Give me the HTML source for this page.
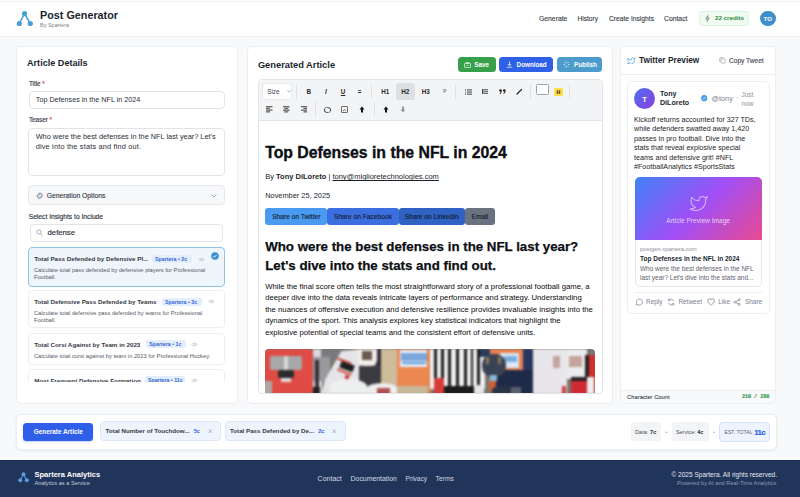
<!DOCTYPE html>
<html><head><meta charset="utf-8">
<style>
*{box-sizing:border-box;margin:0;padding:0}
html,body{width:800px;height:497px;overflow:hidden;background:#f8f9fb;font-family:"Liberation Sans",sans-serif;color:#1f2330}
.a{position:absolute}
.md{-webkit-text-stroke:.15px currentColor}
.nw{white-space:nowrap}
#hdr{left:0;top:0;width:800px;height:36.8px;background:#fff;border-bottom:1px solid #eceef1}
.card{background:#fff;border:1px solid #eceef1;border-radius:5px}
#footer{left:0;top:459.5px;width:800px;height:38px;background:#21355a;border-top:1px solid #1a2a4a}
.lbl{font-size:6.3px;color:#333844;-webkit-text-stroke:.15px #333844}
.req{color:#e5484d;-webkit-text-stroke:.15px #e5484d}
.inp{background:#fff;border:1px solid #e1e4e9;border-radius:4px}
.it{position:absolute;left:0;width:196.5px;background:#fff;border:1px solid #eceef2;border-radius:4px}
.it.sel{background:#eef5fb;border-color:#8fc2e8}
.itt{position:absolute;left:4.9px;top:7px;font-size:6.25px;font-weight:700;color:#353944;white-space:nowrap}
.tag{position:absolute;top:6.7px;height:8.1px;padding:0 0 0 3px;background:#e4edfc;border-radius:2px;color:#3566d6;font-size:5.3px;font-weight:700;line-height:8.1px;white-space:nowrap;width:40.1px}
.eye{position:absolute;top:8.5px;width:7px;height:5px}
.itd{position:absolute;left:4.6px;top:19.2px;width:178px;font-size:5.75px;line-height:6.9px;color:#555a66}
.btn{top:57.2px;height:14.8px;border-radius:3.5px}
.btt{top:60.8px;font-size:6.3px;font-weight:700;color:#fff}
.sep{width:1px;height:15px;background:#dfe2e6}
.tbi{font-size:6.3px;color:#2a2a2a}
.shb{top:207.8px;height:17px;border-radius:3px;font-size:6.65px;line-height:17.6px;text-align:center;color:#131c33;white-space:nowrap;-webkit-text-stroke:.12px #131c33}
.act{top:297.6px;width:8.2px;height:8.2px}
.actt{top:297.8px;font-size:6.45px;color:#7b8190}
.chip{top:421.25px;height:19.25px;background:#eef4fd;border:1px solid #dce7f7;border-radius:4px}
.chipt{top:427.3px;font-size:6.2px;font-weight:700;color:#353944}
.chipc{top:428px;font-size:5.6px;font-weight:700;color:#2f5ee8}
.chipx{top:428.5px;width:4.5px;height:4.5px}
.flk{top:474.6px;color:#d3d9e3}
</style></head><body>
<div id="hdr" class="a"></div>
<div class="a" style="left:0;top:1px;width:800px;height:1px;background:#eef0f2"></div>
<!-- logo -->
<svg class="a" style="left:14px;top:9px" width="20" height="20" viewBox="0 0 20 20">
<g stroke="#4aa0d5" stroke-width="1.5" fill="none"><line x1="10.56" y1="4.6" x2="5.3" y2="14.5"/><line x1="10.56" y1="4.6" x2="16.3" y2="14.5"/></g>
<g fill="#4aa0d5"><circle cx="10.56" cy="4.6" r="2.6"/><circle cx="5.3" cy="14.5" r="2.6"/><circle cx="16.3" cy="14.5" r="2.6"/></g>
</svg>
<div class="a nw" style="left:40px;top:9px;font-size:10.8px;font-weight:700;color:#1b1f2e">Post Generator</div>
<div class="a nw" style="left:40px;top:22px;font-size:5.5px;color:#7a7f8a">By Spartera</div>
<div class="a nw" style="left:539px;top:15px;font-size:6.8px;color:#333844;-webkit-text-stroke:.1px #333844">Generate</div>
<div class="a nw" style="left:577.5px;top:15px;font-size:6.6px;color:#333844;-webkit-text-stroke:.1px #333844">History</div>
<div class="a nw" style="left:609px;top:15px;font-size:6.7px;color:#333844;-webkit-text-stroke:.1px #333844">Create Insights</div>
<div class="a nw" style="left:664px;top:15px;font-size:6.8px;color:#333844;-webkit-text-stroke:.1px #333844">Contact</div>
<div class="a" style="left:699px;top:11px;width:50px;height:15px;background:#f0fbf2;border:1px solid #d8f3de;border-radius:4px"></div>
<svg class="a" style="left:705.3px;top:15.2px" width="5" height="7" viewBox="0 0 10 14"><path d="M6 1L1.5 8H5l-1 5 4.5-7H5z" fill="none" stroke="#4b6b55" stroke-width="1.2" stroke-linejoin="round"/></svg>
<div class="a nw" style="left:715px;top:14px;font-size:6.2px;font-weight:700;color:#2e8b40">22 credits</div>
<div class="a" style="left:760px;top:10.8px;width:15.6px;height:15.6px;border-radius:50%;background:#3d8fcb"></div>
<div class="a nw" style="left:760px;top:14.6px;width:15.6px;text-align:center;font-size:6.2px;font-weight:700;color:#fff">TO</div>

<!-- cards -->
<div class="a card" style="left:16px;top:46px;width:222px;height:358px"></div>
<!-- LEFT CARD CONTENT -->
<div class="a nw" style="left:27px;top:58.4px;font-size:9.1px;font-weight:700;color:#1b1f2e">Article Details</div>
<div class="a nw lbl" style="left:28.9px;top:80px">Title <span class="req">*</span></div>
<div class="a inp" style="left:28.5px;top:91.2px;width:196.2px;height:17.6px"></div>
<div class="a nw" style="left:35.8px;top:94.9px;font-size:7.2px;color:#2a2e38">Top Defenses in the NFL in 2024</div>
<div class="a nw lbl" style="left:28.9px;top:116.2px">Teaser <span class="req">*</span></div>
<div class="a inp" style="left:28.4px;top:128.1px;width:196.3px;height:48.2px"></div>
<div class="a" style="left:35.7px;top:131.8px;width:185px;font-size:7.35px;line-height:9.7px;color:#2a2e38;white-space:nowrap">Who were the best defenses in the NFL last year? Let's<br><span style="letter-spacing:.18px">dive into the stats and find out.</span></div>
<div class="a" style="left:28.4px;top:185.3px;width:196.3px;height:20.2px;background:#f7f8fa;border:1px solid #e6e8ec;border-radius:4px"></div>
<svg class="a" style="left:35.7px;top:191.7px" width="7.6" height="7.6" viewBox="0 0 16 16"><g fill="#d5d8dd" stroke="#858a94" stroke-width="1.7"><circle cx="8" cy="8" r="2.3"/><path d="M8 1.5l1.3 1.6 2-.5.4 2 1.9.9-.9 1.8.9 1.8-1.9.9-.4 2-2-.5L8 14.5l-1.3-1.6-2 .5-.4-2-1.9-.9.9-1.8-.9-1.8 1.9-.9.4-2 2 .5z"/></g></svg>
<div class="a nw md" style="left:46.8px;top:191.5px;font-size:6.75px;color:#3a3f4b">Generation Options</div>
<svg class="a" style="left:210.5px;top:193.5px" width="6" height="4" viewBox="0 0 6 4"><path d="M.6.6L3 3 5.4.6" fill="none" stroke="#8a8f99" stroke-width=".8"/></svg>
<div class="a nw md" style="left:28.7px;top:213.1px;font-size:6.7px;color:#2f3440">Select Insights to Include</div>
<div class="a inp" style="left:29.8px;top:224.2px;width:192.8px;height:17.8px"></div>
<svg class="a" style="left:35.5px;top:229.2px" width="7" height="7" viewBox="0 0 14 14"><g fill="none" stroke="#8a8f99" stroke-width="1.4"><circle cx="6" cy="6" r="4.3"/><path d="M9.2 9.2L13 13"/></g></svg>
<div class="a nw md" style="left:47.6px;top:228.3px;font-size:7.7px;color:#2a2e38">defense</div>

<div class="a" style="left:28.3px;top:247px;width:196.7px;height:135.3px;overflow:hidden">
  <div class="it sel" style="top:0.3px;height:39.6px">
    <div class="itt">Total Pass Defended by Defensive Pl...</div>
    <div class="tag" style="left:122.7px">Spartera • 2c</div>
    <svg class="eye" style="left:169px" viewBox="0 0 14 10"><path d="M1 5C3 1.5 11 1.5 13 5 11 8.5 3 8.5 1 5z" fill="none" stroke="#b8bcc4" stroke-width="1.1"/><circle cx="7" cy="5" r="1.6" fill="none" stroke="#b8bcc4" stroke-width="1.1"/></svg>
    <svg class="a" style="left:181.5px;top:4.2px" width="8" height="8" viewBox="0 0 8 8"><circle cx="4" cy="4" r="3.8" fill="#3d8fd0"/><path d="M2.2 4.1l1.2 1.1 2.3-2.4" fill="none" stroke="#fff" stroke-width=".9"/></svg>
    <div class="itd">Calculate total pass defended by defensive players for Professional Football.</div>
  </div>
  <div class="it" style="top:42.9px;height:38.3px">
    <div class="itt">Total Defensive Pass Defended by Teams</div>
    <div class="tag" style="left:132.7px">Spartera • 3c</div>
    <svg class="eye" style="left:178.5px" viewBox="0 0 14 10"><path d="M1 5C3 1.5 11 1.5 13 5 11 8.5 3 8.5 1 5z" fill="none" stroke="#b8bcc4" stroke-width="1.1"/><circle cx="7" cy="5" r="1.6" fill="none" stroke="#b8bcc4" stroke-width="1.1"/></svg>
    <div class="itd">Calculate total defensive pass defended by teams for Professional Football.</div>
  </div>
  <div class="it" style="top:85.5px;height:32.2px">
    <div class="itt">Total Corsi Against by Team in 2023</div>
    <div class="tag" style="left:116.9px">Spartera • 1c</div>
    <svg class="eye" style="left:161.5px" viewBox="0 0 14 10"><path d="M1 5C3 1.5 11 1.5 13 5 11 8.5 3 8.5 1 5z" fill="none" stroke="#b8bcc4" stroke-width="1.1"/><circle cx="7" cy="5" r="1.6" fill="none" stroke="#b8bcc4" stroke-width="1.1"/></svg>
    <div class="itd" style="width:190px">Calculate total corsi against by team in 2023 for Professional Hockey.</div>
  </div>
  <div class="it" style="top:121.5px;height:38px">
    <div class="itt">Most Frequent Defensive Formation</div>
    <div class="tag" style="left:115.6px;width:40.3px">Spartera • 11c</div>
    <svg class="eye" style="left:162px" viewBox="0 0 14 10"><path d="M1 5C3 1.5 11 1.5 13 5 11 8.5 3 8.5 1 5z" fill="none" stroke="#b8bcc4" stroke-width="1.1"/><circle cx="7" cy="5" r="1.6" fill="none" stroke="#b8bcc4" stroke-width="1.1"/></svg>
  </div>
</div>

<div class="a card" style="left:247.3px;top:46px;width:365.9px;height:358px"></div>

<!-- MIDDLE CARD CONTENT -->
<div class="a nw" style="left:257.9px;top:60px;font-size:9.3px;font-weight:700;color:#1b1f2e">Generated Article</div>
<div class="a btn" style="left:457.5px;width:38.4px;background:#36a04b"></div>
<svg class="a" style="left:464px;top:61.5px" width="7" height="6" viewBox="0 0 14 12"><g fill="none" stroke="#fff" stroke-width="1.3"><rect x="1" y="3" width="12" height="8" rx="1"/><path d="M4 3V1h6v2M5 7h4"/></g></svg>
<div class="a nw btt" style="left:474.3px">Save</div>
<div class="a btn" style="left:499.3px;width:54px;background:#2f60e8"></div>
<svg class="a" style="left:505.5px;top:61.2px" width="7" height="7" viewBox="0 0 14 14"><g fill="none" stroke="#fff" stroke-width="1.4"><path d="M7 1v8M3.5 6L7 9.5 10.5 6M1.5 12.5h11"/></g></svg>
<div class="a nw btt" style="left:516.6px">Download</div>
<div class="a btn" style="left:557.1px;width:45px;background:#4b9bcc"></div>
<svg class="a" style="left:563px;top:61.2px" width="7" height="7" viewBox="0 0 14 14"><g fill="none" stroke="#fff" stroke-width="1.3"><path d="M7 1v3M7 10v3M1 7h3M10 7h3M2.8 2.8l2 2M9.2 9.2l2 2M2.8 11.2l2-2M9.2 4.8l2-2"/></g></svg>
<div class="a nw btt" style="left:574px">Publish</div>

<div class="a" style="left:258.4px;top:79.2px;width:344.4px;height:314.4px;border:1px solid #e3e5ea;border-radius:4px;overflow:hidden;background:#fff">
  <div class="a" style="left:0;top:0;width:344.4px;height:41px;background:#f3f4f6;border-bottom:1px solid #e3e5ea"></div>
</div>
<!-- toolbar row 1 -->
<div class="a" style="left:261.75px;top:83.25px;width:30.5px;height:16.5px;background:#fff;border:1px solid #e6e8ec;border-radius:3px"></div>
<div class="a nw tb" style="left:267.2px;top:88px;font-size:6.3px;color:#3f444f">Size</div>
<svg class="a" style="left:287px;top:90px" width="4" height="3" viewBox="0 0 6 4"><path d="M.6.6L3 3 5.4.6" fill="none" stroke="#777" stroke-width=".9"/></svg>
<div class="a sep" style="left:296px;top:84px"></div>
<div class="a nw tbi" style="left:306.5px;top:88px;font-weight:700">B</div>
<div class="a nw tbi" style="left:325px;top:88px;font-style:italic;font-weight:700">I</div>
<div class="a nw tbi" style="left:340.8px;top:88px;text-decoration:underline;font-weight:700">U</div>
<div class="a nw tbi" style="left:357.8px;top:87.8px;font-weight:700">=</div>
<div class="a sep" style="left:371.3px;top:84px"></div>
<div class="a nw tbi" style="left:381.2px;top:88px;font-weight:700">H1</div>
<div class="a" style="left:396.3px;top:83px;width:18.7px;height:16.5px;background:#dcdfe4;border-radius:3px"></div>
<div class="a nw tbi" style="left:401.3px;top:88px;font-weight:700">H2</div>
<div class="a nw tbi" style="left:421.8px;top:88px;font-weight:700">H3</div>
<div class="a nw tbi" style="left:443.2px;top:89px;font-size:4.5px;font-weight:700;color:#777">P</div>
<div class="a sep" style="left:455.4px;top:84px"></div>
<svg class="a" style="left:465px;top:88.6px" width="7" height="6" viewBox="0 0 14 12"><g fill="#222"><circle cx="1.2" cy="1.8" r="1.1"/><circle cx="1.2" cy="6" r="1.1"/><circle cx="1.2" cy="10.2" r="1.1"/><rect x="4" y="1" width="10" height="1.7"/><rect x="4" y="5.2" width="10" height="1.7"/><rect x="4" y="9.4" width="10" height="1.7"/></g></svg>
<svg class="a" style="left:482.3px;top:88.9px" width="6" height="5.5" viewBox="0 0 12 11"><g fill="#444"><rect x="0" y="0" width="3" height="11"/><rect x="4" y="0.5" width="8" height="2"/><rect x="4" y="4.5" width="8" height="2"/><rect x="4" y="8.5" width="8" height="2"/></g></svg>
<svg class="a" style="left:499.3px;top:88.8px" width="7" height="5.5" viewBox="0 0 14 11"><g fill="#222"><circle cx="3" cy="3" r="2.6"/><path d="M5.4 3.5C5.4 7 4 9 1.5 10.5L1 9.5C2.5 8.5 3 7 3 5.5z"/><circle cx="10.5" cy="3" r="2.6"/><path d="M12.9 3.5C12.9 7 11.5 9 9 10.5L8.5 9.5C10 8.5 10.5 7 10.5 5.5z"/></g></svg>
<svg class="a" style="left:516px;top:88px" width="7" height="7" viewBox="0 0 14 14"><path d="M2 12L11 3" stroke="#222" stroke-width="2.4" stroke-linecap="round"/></svg>
<div class="a sep" style="left:530px;top:84px"></div>
<div class="a" style="left:536.4px;top:84.2px;width:12.4px;height:10.8px;background:#fff;border:1px solid #9ca3af;border-radius:1.5px"></div>
<div class="a" style="left:554.4px;top:87.8px;width:8.4px;height:7.9px;background:#fde047;border-radius:1px"></div>
<div class="a nw" style="left:556.5px;top:89.1px;font-size:5.3px;font-weight:700;color:#222">H</div>
<div class="a sep" style="left:569px;top:84px"></div>
<!-- toolbar row 2 -->
<svg class="a" style="left:266px;top:106.3px" width="6.5" height="6.5" viewBox="0 0 13 13"><g fill="#666"><rect x="0" y="0" width="13" height="2.6"/><rect x="0" y="3.5" width="8" height="2.6"/><rect x="0" y="7" width="13" height="2.6"/><rect x="0" y="10.4" width="8" height="2.6"/></g></svg>
<svg class="a" style="left:283.2px;top:106.3px" width="6.5" height="6.5" viewBox="0 0 13 13"><g fill="#666"><rect x="0" y="0" width="13" height="2.6"/><rect x="2.5" y="3.5" width="8" height="2.6"/><rect x="0" y="7" width="13" height="2.6"/><rect x="2.5" y="10.4" width="8" height="2.6"/></g></svg>
<svg class="a" style="left:300.5px;top:106.3px" width="6.5" height="6.5" viewBox="0 0 13 13"><g fill="#666"><rect x="0" y="0" width="13" height="2.6"/><rect x="5" y="3.5" width="8" height="2.6"/><rect x="0" y="7" width="13" height="2.6"/><rect x="5" y="10.4" width="8" height="2.6"/></g></svg>
<div class="a sep" style="left:314.6px;top:102.2px;height:14.8px"></div>
<svg class="a" style="left:324px;top:106.5px" width="7" height="6" viewBox="0 0 14 12"><path d="M3 1h8l2.5 5L11 11H3L.5 6z" fill="none" stroke="#333" stroke-width="1.6" transform="rotate(20 7 6)"/></svg>
<svg class="a" style="left:341px;top:106px" width="7" height="7" viewBox="0 0 14 14"><g fill="none" stroke="#444" stroke-width="1.5"><rect x="1" y="1" width="12" height="12" rx="1"/><path d="M4 10l3-3 3 3"/></g></svg>
<svg class="a" style="left:359px;top:106px" width="6" height="7" viewBox="0 0 12 14"><path d="M6 1L1 7h3v6h4V7h3z" fill="#111"/></svg>
<div class="a sep" style="left:373.6px;top:102.2px;height:14.8px"></div>
<svg class="a" style="left:383.2px;top:106px" width="6" height="7" viewBox="0 0 12 14"><path d="M6 1L1 7h3v6h4V7h3z" fill="#111"/></svg>
<svg class="a" style="left:400.2px;top:106px" width="6" height="7" viewBox="0 0 12 14"><path d="M6 13L1 7h3V1h4v6h3z" fill="#999"/></svg>

<!-- article content -->
<div class="a nw" style="left:265.2px;top:144.3px;font-size:15.8px;font-weight:700;color:#0d0f14;-webkit-text-stroke:.35px #0d0f14">Top Defenses in the NFL in 2024</div>
<div class="a nw" style="left:265.2px;top:172.3px;font-size:7.5px;color:#1b1f2a">By <b>Tony DiLoreto</b> | <span style="text-decoration:underline">tony@miglioretechnologies.com</span></div>
<div class="a nw" style="left:265.2px;top:190.5px;font-size:7.4px;color:#1b1f2a">November 25, 2025</div>
<div class="a shb" style="left:265.2px;width:62.2px;background:#4a9af0">Share on Twitter</div>
<div class="a shb" style="left:327.4px;width:71.2px;background:#3b6fe0">Share on Facebook</div>
<div class="a shb" style="left:398.6px;width:66.3px;background:#2f62c2">Share on LinkedIn</div>
<div class="a shb" style="left:464.9px;width:30px;background:#6b7280">Email</div>
<div class="a nw" style="left:265.2px;top:236.5px;font-size:13.3px;line-height:19.6px;font-weight:700;color:#0d0f14;-webkit-text-stroke:.25px #0d0f14">Who were the best defenses in the NFL last year?<br>Let's dive into the stats and find out.</div>
<div class="a nw" style="left:265.2px;top:280.5px;font-size:7.72px;line-height:11.65px;color:#0a0a0a">While the final score often tells the most straightforward story of a professional football game, a<br>deeper dive into the data reveals intricate layers of performance and strategy. Understanding<br>the nuances of offensive execution and defensive resilience provides invaluable insights into the<br>dynamics of the sport. This analysis explores key statistical indicators that highlight the<br>explosive potential of special teams and the consistent effort of defensive units.</div>
<div class="a" id="photo" style="left:264.6px;top:349.2px;width:330.7px;height:44px;border-radius:4px 4px 0 0;overflow:hidden;background:#7a7670"><div style="position:absolute;left:0;top:0;width:331px;height:44px;filter:blur(1.3px)"><div style="position:absolute;left:-0.6px;top:-0.2px;width:39.0px;height:45.0px;background:#e04b45;"></div><div style="position:absolute;left:48.4px;top:-0.2px;width:9.0px;height:45.0px;background:#d8d8dc;"></div><div style="position:absolute;left:48.4px;top:7.4px;width:17.0px;height:24.4px;background:#9a9a9e;"></div><div style="position:absolute;left:50.4px;top:10.8px;width:4.4px;height:28.5px;background:#333338;"></div><div style="position:absolute;left:48.4px;top:38.2px;width:7.0px;height:6.6px;background:#222;"></div><div style="position:absolute;left:5.4px;top:6.8px;width:32.4px;height:14.4px;background:#a8a8aa;border-radius:2px;"></div><div style="position:absolute;left:19.4px;top:6.8px;width:4.0px;height:14.0px;background:#d8d8d8;"></div><div style="position:absolute;left:37.4px;top:-0.2px;width:11.0px;height:45.0px;background:#e04b45;border-radius:0 4px 4px 0;"></div><div style="position:absolute;left:13.4px;top:20.8px;width:16.0px;height:8.0px;background:#2b2b2b;border-radius:2px;"></div><div style="position:absolute;left:16.4px;top:28.8px;width:9.7px;height:3.6px;background:#dddddd;"></div><div style="position:absolute;left:-0.6px;top:31.8px;width:7.6px;height:13.0px;background:#b0a8a8;"></div><div style="position:absolute;left:56.9px;top:-0.2px;width:25.5px;height:7.6px;background:#7a7a7e;"></div><div style="position:absolute;left:56.9px;top:-0.2px;width:39.5px;height:45.0px;background:#e6e4e8;clip-path:polygon(50% 5%,100% 0,100% 100%,0 100%,8% 70%);"></div><div style="position:absolute;left:75.0px;top:13.8px;width:13.9px;height:7.4px;background:#1e1e1e;transform:rotate(20deg);"></div><div style="position:absolute;left:72.4px;top:10.6px;width:15.0px;height:2.2px;background:#d04a3a;transform:rotate(20deg);"></div><div style="position:absolute;left:72.4px;top:22.3px;width:15.0px;height:2.1px;background:#d04a3a;transform:rotate(20deg);"></div><div style="position:absolute;left:80.4px;top:25.5px;width:4.0px;height:4.3px;background:#c83a3a;"></div><div style="position:absolute;left:94.2px;top:17.0px;width:23.4px;height:19.8px;background:#3a3a40;"></div><div style="position:absolute;left:111.2px;top:-0.2px;width:6.4px;height:17.2px;background:#333338;"></div><div style="position:absolute;left:93.1px;top:-0.2px;width:19.1px;height:17.2px;background:#f0eee8;border-radius:0 0 6px 6px;"></div><div style="position:absolute;left:97.4px;top:2.1px;width:9.6px;height:8.5px;background:#6a5a50;"></div><div style="position:absolute;left:116.4px;top:-0.2px;width:17.0px;height:45.0px;background:#cdbb9a;"></div><div style="position:absolute;left:132.4px;top:-0.2px;width:32.0px;height:38.4px;background:#ec8752;"></div><div style="position:absolute;left:135.7px;top:0.5px;width:27.1px;height:17.0px;background:#e6eef8;"></div><div style="position:absolute;left:136.7px;top:4.2px;width:25.7px;height:7.5px;background:#7aa6dc;"></div><div style="position:absolute;left:137.4px;top:12.8px;width:24.0px;height:2.0px;background:#5a9ad8;"></div><div style="position:absolute;left:127.2px;top:37.2px;width:37.2px;height:7.6px;background:#c8b89a;"></div><div style="position:absolute;left:65.4px;top:29.8px;width:37.3px;height:15.0px;background:#eef0f0;border-radius:50% 50% 0 0;"></div><div style="position:absolute;left:102.7px;top:34.0px;width:29.7px;height:10.8px;background:#eeeeee;border-radius:50% 50% 0 0;"></div><div style="position:absolute;left:112.4px;top:39.3px;width:12.6px;height:5.5px;background:#b05050;"></div><div style="position:absolute;left:163.4px;top:-0.2px;width:3.0px;height:45.0px;background:#e08050;"></div><div style="position:absolute;left:165.4px;top:-0.2px;width:55.4px;height:39.5px;background:#f0f0f0;"></div><div style="position:absolute;left:169.4px;top:-0.2px;width:2.8px;height:39.5px;background:#1c1c1c;"></div><div style="position:absolute;left:176.9px;top:-0.2px;width:2.8px;height:39.5px;background:#1c1c1c;"></div><div style="position:absolute;left:183.8px;top:-0.2px;width:2.8px;height:39.5px;background:#1c1c1c;"></div><div style="position:absolute;left:191.8px;top:-0.2px;width:2.8px;height:39.5px;background:#1c1c1c;"></div><div style="position:absolute;left:199.2px;top:-0.2px;width:2.8px;height:39.5px;background:#1c1c1c;"></div><div style="position:absolute;left:206.1px;top:-0.2px;width:2.8px;height:39.5px;background:#1c1c1c;"></div><div style="position:absolute;left:212.5px;top:-0.2px;width:2.8px;height:39.5px;background:#1c1c1c;"></div><div style="position:absolute;left:169.8px;top:28.8px;width:9.6px;height:16.0px;background:#d83a3a;"></div><div style="position:absolute;left:179.4px;top:37.2px;width:29.7px;height:7.6px;background:#1a1a1a;"></div><div style="position:absolute;left:209.1px;top:36.1px;width:10.6px;height:8.7px;background:#e8e8e8;"></div><div style="position:absolute;left:215.4px;top:-0.2px;width:9.6px;height:7.6px;background:#2a3a60;"></div><div style="position:absolute;left:225.0px;top:-0.2px;width:34.4px;height:24.2px;background:#e88050;"></div><div style="position:absolute;left:235.7px;top:4.2px;width:18.3px;height:14.3px;background:#dce9f6;"></div><div style="position:absolute;left:239.4px;top:6.8px;width:13.0px;height:6.0px;background:#7aaee0;"></div><div style="position:absolute;left:258.4px;top:-0.2px;width:10.8px;height:29.6px;background:#27365e;"></div><div style="position:absolute;left:231.4px;top:21.2px;width:47.6px;height:23.6px;background:#1f2a48;"></div><div style="position:absolute;left:217.6px;top:5.3px;width:23.4px;height:22.3px;background:#3a4255;border-radius:45%;"></div><div style="position:absolute;left:221.4px;top:7.8px;width:2.6px;height:7.0px;background:#8a7a58;"></div><div style="position:absolute;left:233.9px;top:7.8px;width:2.5px;height:7.0px;background:#8a7a58;"></div><div style="position:absolute;left:225.0px;top:25.5px;width:7.4px;height:6.3px;background:#8ab8d8;"></div><div style="position:absolute;left:224.0px;top:31.8px;width:7.4px;height:9.6px;background:#d06030;"></div><div style="position:absolute;left:227.2px;top:37.2px;width:21.2px;height:7.6px;background:#2a3448;border-radius:50% 50% 0 0;"></div><div style="position:absolute;left:246.4px;top:38.1px;width:9.8px;height:6.7px;background:#5a6070;"></div><div style="position:absolute;left:268.1px;top:-0.2px;width:34.8px;height:45.0px;background:#e8e6ea;"></div><div style="position:absolute;left:288.8px;top:6.6px;width:6.6px;height:11.9px;background:#c4a49c;"></div><div style="position:absolute;left:302.9px;top:-0.2px;width:19.5px;height:29.6px;background:#ecebee;"></div><div style="position:absolute;left:304.0px;top:6.6px;width:13.1px;height:10.9px;background:#c4a49c;"></div><div style="position:absolute;left:320.4px;top:5.5px;width:4.0px;height:23.9px;background:#2a2020;"></div><div style="position:absolute;left:324.4px;top:5.5px;width:7.0px;height:23.9px;background:#d03030;"></div><div style="position:absolute;left:306.2px;top:28.3px;width:16.2px;height:16.5px;background:#d02a35;"></div><div style="position:absolute;left:306.2px;top:28.3px;width:16.2px;height:3.5px;background:#2a2020;"></div><div style="position:absolute;left:322.4px;top:28.3px;width:6.6px;height:16.5px;background:#eeeeee;"></div><div style="position:absolute;left:329.0px;top:28.3px;width:2.4px;height:16.5px;background:#d03030;"></div><div style="position:absolute;left:297.4px;top:36.6px;width:4.5px;height:8.2px;background:#d04040;"></div></div></div></div>
<div class="a card" style="left:620px;top:46px;width:156px;height:358px"></div>


<!-- RIGHT CARD CONTENT -->
<svg class="a" style="left:627px;top:56.6px" width="8.5" height="7.5" viewBox="0 0 24 20"><path d="M23 2a10 10 0 0 1-3 1.5 4.5 4.5 0 0 0-7.9 3v1A10.7 10.7 0 0 1 3 3s-4 9 5 13a11.6 11.6 0 0 1-7 2c9 5 20 0 20-11.5a4.5 4.5 0 0 0-.1-.8A7.7 7.7 0 0 0 23 2z" fill="none" stroke="#4ea2e6" stroke-width="2.3" stroke-linejoin="round"/></svg>
<div class="a nw" style="left:639px;top:55.2px;font-size:8.3px;font-weight:700;color:#1b1f2e">Twitter Preview</div>
<svg class="a" style="left:719px;top:57px" width="6.5" height="6.5" viewBox="0 0 14 14"><g fill="none" stroke="#8a8f99" stroke-width="1.3"><rect x="4" y="4" width="9" height="9" rx="1.5"/><path d="M10 1.5H2.5a1 1 0 0 0-1 1V10"/></g></svg>
<div class="a nw md" style="left:729px;top:57px;font-size:6.6px;color:#4b505b">Copy Tweet</div>
<div class="a" style="left:621px;top:74px;width:155px;height:1px;background:#eceef2"></div>
<div class="a" style="left:627.3px;top:81.4px;width:142.8px;height:232.6px;border:1px solid #eceef2;border-radius:5px;background:#fff"></div>
<div class="a" style="left:634px;top:88px;width:21px;height:21px;border-radius:50%;background:linear-gradient(135deg,#4f6ff2,#8b3fdc)"></div>
<div class="a nw" style="left:634px;top:94.5px;width:21px;text-align:center;font-size:7.5px;font-weight:700;color:#fff">T</div>
<div class="a nw" style="left:660px;top:89.6px;font-size:7.1px;line-height:9.6px;font-weight:700;color:#1b1f2e">Tony<br>DiLoreto</div>
<svg class="a" style="left:701.2px;top:95.4px" width="6.4" height="6.4" viewBox="0 0 8 8"><circle cx="4" cy="4" r="3.9" fill="#4b9fe3"/><path d="M2.3 4.1l1.1 1 2.3-2.3" fill="none" stroke="#fff" stroke-width=".9"/></svg>
<div class="a nw" style="left:711.6px;top:93.8px;font-size:7.3px;color:#7b8190">@tony</div>
<div class="a nw" style="left:736px;top:93.8px;font-size:7px;color:#9aa0aa">·</div>
<div class="a nw" style="left:741.6px;top:90px;font-size:6.4px;line-height:9px;color:#8b909b">Just<br>now</div>
<div class="a nw" style="left:634px;top:115.5px;font-size:7.15px;line-height:9.55px;color:#1f2229">Kickoff returns accounted for 327 TDs,<br>while defenders swatted away 1,420<br>passes in pro football. Dive into the<br>stats that reveal explosive special<br>teams and defensive grit! #NFL<br>#FootballAnalytics #SportsStats</div>
<div class="a" style="left:634.75px;top:177.1px;width:127.15px;height:110.4px;border:1px solid #e6e8ec;border-radius:5px;background:#fff"></div>
<div class="a" style="left:634.75px;top:177.1px;width:127.15px;height:63.2px;border-radius:5px 5px 0 0;background:linear-gradient(135deg,#3f82f6 0%,#a04ff6 50%,#ea4a8f 100%)"></div>
<svg class="a" style="left:688.5px;top:195px" width="19.5" height="15.5" viewBox="0 0 24 20"><path d="M23 2a10 10 0 0 1-3 1.5 4.5 4.5 0 0 0-7.9 3v1A10.7 10.7 0 0 1 3 3s-4 9 5 13a11.6 11.6 0 0 1-7 2c9 5 20 0 20-11.5a4.5 4.5 0 0 0-.1-.8A7.7 7.7 0 0 0 23 2z" fill="none" stroke="rgba(255,255,255,.6)" stroke-width="1.3" stroke-linejoin="round"/></svg>
<div class="a nw" style="left:666.25px;top:217.3px;font-size:6.6px;color:rgba(255,255,255,.72)">Article Preview Image</div>
<div class="a nw" style="left:640px;top:245.9px;font-size:5.87px;color:#8a8f99">postgen.spartera.com</div>
<div class="a nw" style="left:640px;top:254.9px;font-size:6.5px;font-weight:700;color:#1b1f2e">Top Defenses in the NFL in 2024</div>
<div class="a nw" style="left:640px;top:265.1px;font-size:6.48px;line-height:8.6px;color:#5c616c">Who were the best defenses in the NFL<br>last year? Let's dive into the stats and...</div>
<div class="a" style="left:634.75px;top:292.2px;width:127.15px;height:1px;background:#eceef2"></div>
<svg class="a act" style="left:634.75px" viewBox="0 0 16 16"><path d="M2 13.5l1.2-3A6 6 0 1 1 5.5 13z" fill="none" stroke="#8a8f99" stroke-width="1.6" stroke-linejoin="round"/></svg>
<div class="a nw actt" style="left:646px">Reply</div>
<svg class="a act" style="left:667.2px" viewBox="0 0 16 16"><g fill="none" stroke="#8a8f99" stroke-width="1.6"><path d="M13 6.5A5.5 5.5 0 0 0 3 5M3 9.5A5.5 5.5 0 0 0 13 11"/><path d="M3 1.5V5h3.5M13 14.5V11H9.5"/></g></svg>
<div class="a nw actt" style="left:678.4px">Retweet</div>
<svg class="a act" style="left:707px" viewBox="0 0 16 16"><path d="M8 14S1.5 10 1.5 5.5A3.3 3.3 0 0 1 8 4a3.3 3.3 0 0 1 6.5 1.5C14.5 10 8 14 8 14z" fill="none" stroke="#8a8f99" stroke-width="1.6"/></svg>
<div class="a nw actt" style="left:718.2px">Like</div>
<svg class="a act" style="left:733.4px" viewBox="0 0 16 16"><g fill="none" stroke="#8a8f99" stroke-width="1.6"><circle cx="12" cy="3.5" r="2"/><circle cx="4" cy="8" r="2"/><circle cx="12" cy="12.5" r="2"/><path d="M5.8 7l4.4-2.5M5.8 9l4.4 2.5"/></g></svg>
<div class="a nw actt" style="left:745px">Share</div>
<div class="a" style="left:621px;top:389.9px;width:154px;height:13.1px;background:#f8f9fb;border-top:1px solid #eceef2;border-radius:0 0 5px 5px"></div>
<div class="a nw" style="left:627.1px;top:393.9px;font-size:5.8px;color:#3f444f;-webkit-text-stroke:.1px #3f444f">Character Count</div>
<div class="a nw" style="left:741.9px;top:394.2px;font-size:5.1px;font-weight:700;color:#35a055;-webkit-text-stroke:.2px #35a055;font-family:'Liberation Mono',monospace">210 / 280</div>

<!-- bottom bar -->
<div class="a card" style="left:16px;top:414.2px;width:761px;height:35.6px;box-shadow:0 1px 3px rgba(0,0,0,.07)"></div>

<div id="footer" class="a"></div>

<!-- bottom bar content -->
<div class="a" style="left:23.25px;top:422.5px;width:69.75px;height:18.75px;background:#2f5ee8;border-radius:3.5px;box-shadow:0 1px 2px rgba(47,94,232,.3)"></div>
<div class="a nw" style="left:33.75px;top:428px;font-size:6.4px;font-weight:700;color:#fff">Generate Article</div>
<div class="a chip" style="left:100px;width:121.25px"></div>
<div class="a nw chipt" style="left:105.5px">Total Number of Touchdow...</div>
<div class="a nw chipc" style="left:193.75px">5c</div>
<svg class="a chipx" style="left:207.5px" viewBox="0 0 8 8"><path d="M1 1l6 6M7 1L1 7" stroke="#8a8f99" stroke-width="1.1"/></svg>
<div class="a chip" style="left:224.5px;width:121.25px"></div>
<div class="a nw chipt" style="left:230px">Total Pass Defended by De...</div>
<div class="a nw chipc" style="left:318.25px">2c</div>
<svg class="a chipx" style="left:331.75px" viewBox="0 0 8 8"><path d="M1 1l6 6M7 1L1 7" stroke="#8a8f99" stroke-width="1.1"/></svg>

<div class="a" style="left:631px;top:422.3px;width:30px;height:18.9px;background:#f3f4f6;border-radius:3px"></div>
<div class="a nw" style="left:634.9px;top:428.9px;font-size:5.7px;color:#4b505b">Data: <b style="color:#1b1f2e">7c</b></div>
<div class="a nw" style="left:665.3px;top:428.6px;font-size:6px;color:#b0b5bd">•</div>
<div class="a" style="left:672px;top:422.3px;width:36.6px;height:18.9px;background:#f3f4f6;border-radius:3px"></div>
<div class="a nw" style="left:675.9px;top:428.9px;font-size:5.5px;color:#4b505b">Service: <b style="color:#1b1f2e">4c</b></div>
<div class="a nw" style="left:713px;top:428.6px;font-size:6px;color:#b0b5bd">•</div>
<div class="a" style="left:718.8px;top:422.1px;width:51px;height:19.8px;background:#eef4ff;border:1px solid #d3e2fb;border-radius:4px"></div>
<div class="a nw" style="left:724.5px;top:429.1px;font-size:5px;color:#5b606b;letter-spacing:.05px">EST. TOTAL</div>
<div class="a nw" style="left:754.3px;top:427.8px;font-size:7.8px;font-weight:700;color:#2f5ee8;letter-spacing:-.7px;-webkit-text-stroke:.2px #2f5ee8">11c</div>

<!-- footer content -->
<svg class="a" style="left:18px;top:472px" width="11" height="11" viewBox="0 0 11 11"><g stroke="#5b9be6" stroke-width="1.1"><line x1="5.5" y1="2.2" x2="2.2" y2="8.3"/><line x1="5.5" y1="2.2" x2="8.8" y2="8.3"/></g><g fill="#5b9be6"><circle cx="5.5" cy="2.2" r="2"/><circle cx="2.2" cy="8.3" r="2"/><circle cx="8.8" cy="8.3" r="2"/></g></svg>
<div class="a nw" style="left:34.5px;top:469.8px;font-size:7.5px;font-weight:700;color:#fff">Spartera Analytics</div>
<div class="a nw" style="left:34.5px;top:479.8px;font-size:5.67px;color:#c5cddb">Analytics as a Service</div>
<div class="a nw flk" style="left:317.6px;font-size:7px">Contact</div>
<div class="a nw flk" style="left:350.6px;font-size:6.9px">Documentation</div>
<div class="a nw flk" style="left:405.6px;font-size:6.55px">Privacy</div>
<div class="a nw flk" style="left:435.6px;font-size:6.75px">Terms</div>
<div class="a nw" style="left:671.4px;top:470.9px;font-size:6.55px;color:#e2e6ee">© 2025 Spartera. All rights reserved.</div>
<div class="a nw" style="left:677px;top:479.7px;font-size:5.7px;color:#8f9bb2">Powered by AI and Real-Time Analytics</div>
</body></html>
